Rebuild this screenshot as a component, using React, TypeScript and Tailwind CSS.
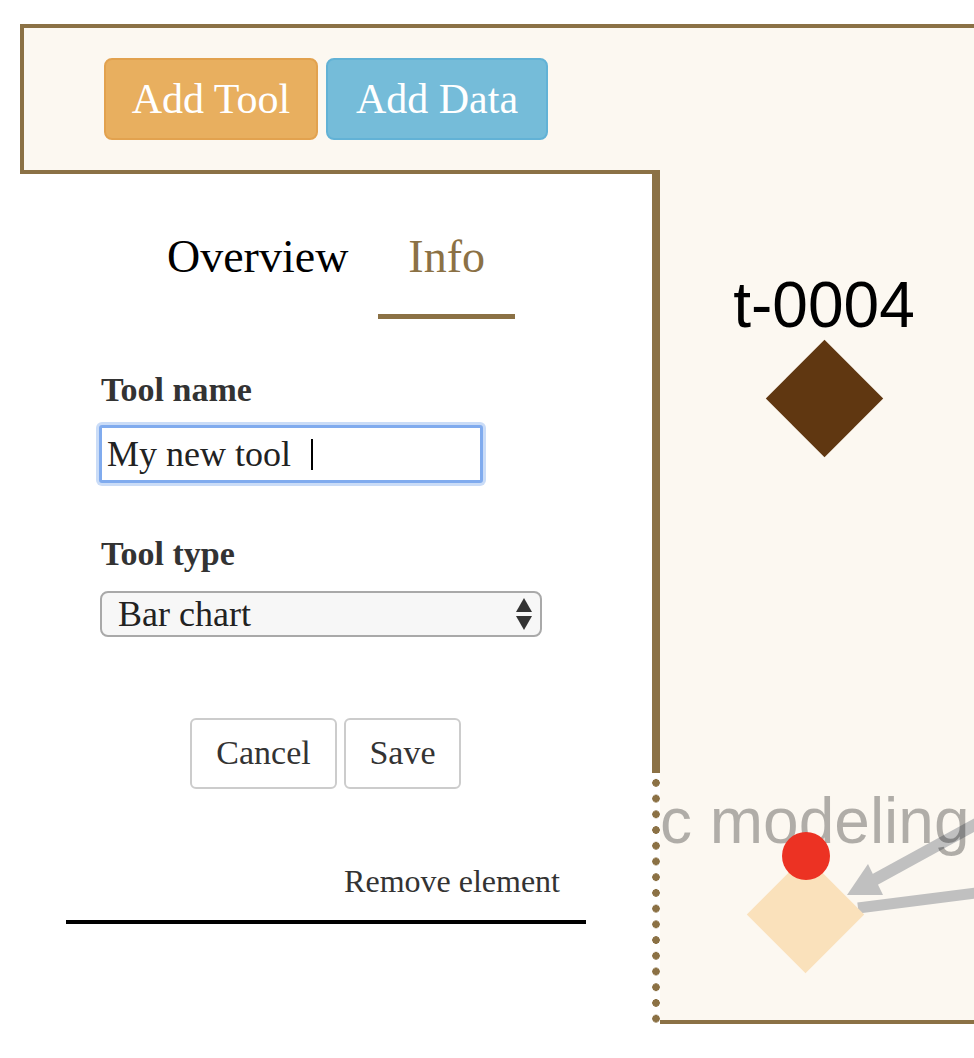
import React from 'react';

const serif = "font-['Liberation_Serif','Times_New_Roman',serif]";

function ToolPanel() {
  return (
    <div className={`flex flex-1 flex-col ${serif}`}>
      {/* Tabs */}
      <div className="mt-[60px] flex justify-center">
        <div className="border-b-[5px] border-transparent px-[30px] pb-[34px] text-[46px] leading-[46px] text-black">
          Overview
        </div>
        <div className="border-b-[5px] border-[#8b7145] px-[30px] pb-[34px] text-[46px] leading-[46px] text-[#8b7145]">
          Info
        </div>
      </div>

      {/* Tool name */}
      <div className="mt-[54px] ml-[101px] text-[34px] leading-[34px] font-bold text-[#333]">Tool name</div>
      <div className="mt-[18px] ml-[99px] flex h-[58px] w-[384px] items-center rounded-[3px] border-[3px] border-[#80abee] bg-white pl-[5px] text-[36px] text-[#222] shadow-[0_0_0_3px_#cadcf7]">
        <span>My new tool</span>
        <span className="ml-[20px] inline-block h-[31px] w-[2px] bg-black" />
      </div>

      {/* Tool type */}
      <div className="mt-[54px] ml-[101px] text-[34px] leading-[34px] font-bold text-[#333]">Tool type</div>
      <div className="mt-[20px] ml-[100px] flex h-[46px] w-[442px] items-center justify-between rounded-[8px] border-2 border-[#a9a9a9] bg-[#f7f7f7] pl-[16px] pr-[8px] text-[36px] text-[#222]">
        <span>Bar chart</span>
        <svg width="16" height="32" viewBox="0 0 16 32">
          <polygon points="8,0 16,14 0,14" fill="#333" />
          <polygon points="0,18 16,18 8,32" fill="#333" />
        </svg>
      </div>

      {/* Actions */}
      <div className="mt-[81px] flex justify-center gap-[7px] pr-[1px]">
        <button className="h-[71px] w-[147px] rounded-[6px] border-2 border-[#cccccc] bg-white pb-[3px] text-[34px] text-[#333]">
          Cancel
        </button>
        <button className="h-[71px] w-[117px] rounded-[6px] border-2 border-[#cccccc] bg-white pb-[3px] text-[34px] text-[#333]">
          Save
        </button>
      </div>

      <div className="mx-[66px] mt-[76px] pr-[26px] text-right text-[32px] leading-[32px] text-[#333]">
        Remove element
      </div>
      <div className="mx-[66px] mt-[23px] h-[4px] bg-black" />
    </div>
  );
}

function Canvas() {
  return (
    <div className="relative h-[854px] flex-1 overflow-hidden border-b-4 border-[#8b7145] bg-[#fcf8f1] font-['Liberation_Sans',Arial,sans-serif]">
      {/* node t-0004 */}
      <div className="absolute left-[64px] top-[103px] w-[200px] text-center text-[64px] leading-[64px] text-black">
        t-0004
      </div>
      <div className="absolute left-[123px] top-[187px] h-[83px] w-[83px] rotate-45 bg-[#603711]" />

      {/* edges */}
      <svg className="absolute left-0 top-0" width="314" height="850" viewBox="0 0 314 850">
        <g fill="#c0c0c0" stroke="#c0c0c0">
          <line x1="340" y1="641" x2="214" y2="710" strokeWidth="12" />
          <polygon points="187,725 208,694 223,725" stroke="none" />
          <line x1="340" y1="720" x2="198" y2="738" strokeWidth="11" />
        </g>
      </svg>

      <div className="absolute left-0 top-[619px] whitespace-nowrap text-[64px] leading-[64px] text-black/30">
        c modeling
      </div>
      <div className="absolute left-[104px] top-[703px] h-[83px] w-[83px] rotate-45 bg-[#fae1bb]" />
      <div className="absolute left-[122px] top-[662px] h-[48px] w-[48px] rounded-full bg-[#ec3223]" />
    </div>
  );
}

export default function App() {
  return (
    <div className="h-[1058px] w-[974px] overflow-hidden bg-white">
      {/* toolbar */}
      <div className={`mt-[24px] ml-[20px] flex h-[146px] gap-[8px] border-t-4 border-l-4 border-[#8b7145] bg-[#fcf8f1] pl-[80px] pt-[30px] ${serif}`}>
        <button className="flex h-[82px] w-[214px] items-center justify-center rounded-[8px] border-2 border-[#e2a24f] bg-[#e8af5f] text-[42px] text-white">
          Add Tool
        </button>
        <button className="flex h-[82px] w-[222px] items-center justify-center rounded-[8px] border-2 border-[#62b2d6] bg-[#75bcd9] text-[42px] text-white">
          Add Data
        </button>
      </div>

      <div className="flex">
        <div className="flex w-[660px] flex-col">
          <div className="ml-[20px] h-[4px] bg-[#8b7145]" />
          <div className="flex">
            <ToolPanel />
            <div className="flex w-[8px] flex-col">
              <div className="h-[599px] bg-[#8b7145]" />
              <div className="mt-[2px] h-[248px] bg-[radial-gradient(circle,#8b7145_3.5px,transparent_4px)] bg-[length:8px_15.73px]" />
            </div>
          </div>
        </div>
        <Canvas />
      </div>
    </div>
  );
}
